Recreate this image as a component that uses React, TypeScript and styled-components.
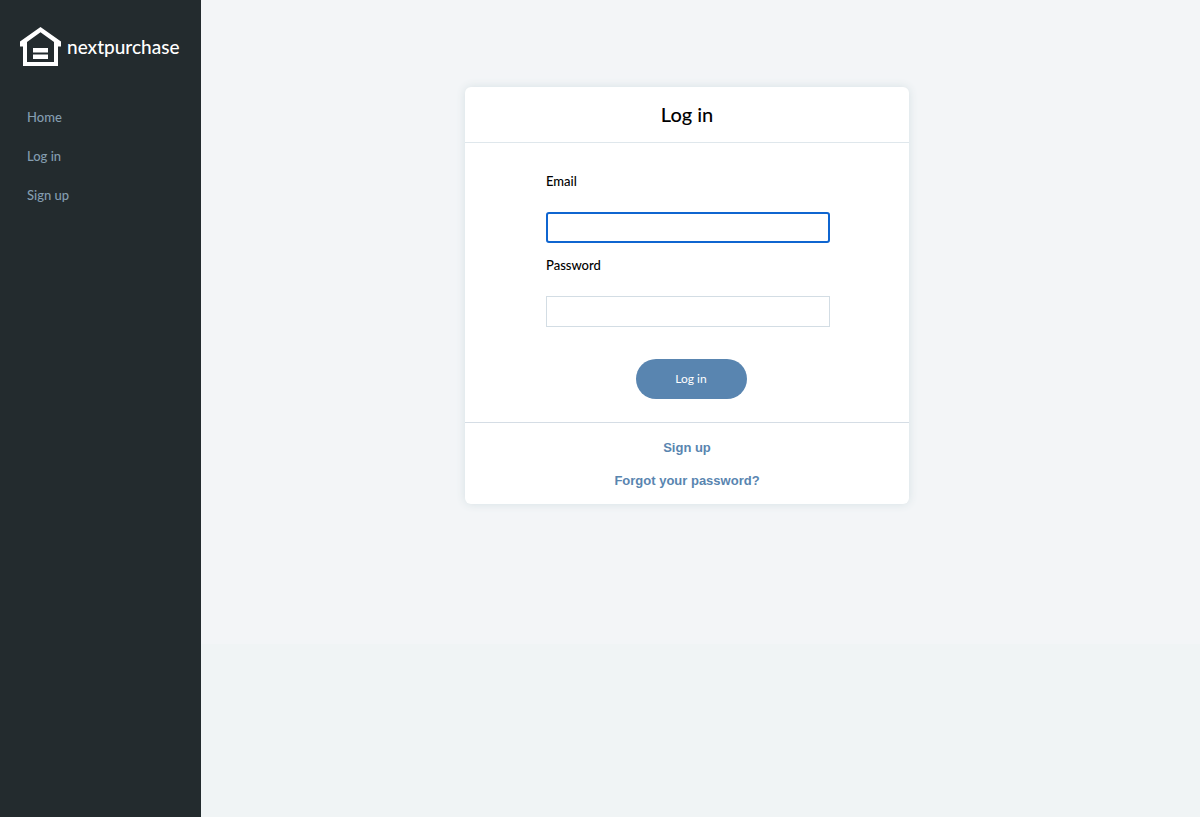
import React from "react";
import styled, { createGlobalStyle } from "styled-components";

const GlobalStyle = createGlobalStyle`
  *, *::before, *::after { box-sizing: border-box; }
  body {
    margin: 0;
    background: #f0f4f5;
    color: #000;
    font-family: Lato, "Liberation Sans", sans-serif;
    font-size: 13px;
    line-height: 20px;
  }
`;

const Page = styled.div`
  display: flex;
  min-height: 100vh;
`;

const Sidebar = styled.aside`
  flex: 0 0 201px;
  width: 201px;
  background: #232b2e;
`;

const Brand = styled.a`
  display: flex;
  align-items: center;
  gap: 5px;
  padding: 26px 0 0 20px;
  color: #fff;
  text-decoration: none;
`;

const BrandName = styled.span`
  font-size: 19px;
  font-weight: 500;
  line-height: 42px;
`;

const Nav = styled.nav`
  display: flex;
  flex-direction: column;
  align-items: flex-start;
  gap: 19px;
  padding: 39px 27px;
`;

const NavLink = styled.a`
  color: #849db0;
  font-size: 13px;
  font-weight: 500;
  line-height: 20px;
  text-decoration: none;
`;

const Main = styled.main`
  flex: 1;
  min-width: 0;
`;

const Section = styled.section`
  display: flex;
  justify-content: center;
  padding: 87px 27px 140px 0;
  background: #f3f5f7;
`;

const Card = styled.div`
  width: 100%;
  max-width: 444px;
  border-radius: 6px;
  background: #fff;
  box-shadow: 0 0 10px #d6e0e4;
`;

const Title = styled.h1`
  margin: 0;
  padding: 13px 0 14px;
  border-bottom: 1px solid #dfe7ec;
  font-size: 20px;
  font-weight: 500;
  line-height: 28px;
  text-align: center;
`;

const Form = styled.form`
  display: flex;
  flex-direction: column;
  padding: 28px 79px 23px 81px;
`;

const Field = styled.div`
  display: flex;
  flex-direction: column;
  gap: 21px;
  margin-bottom: 12px;
`;

const Label = styled.label`
  font-size: 13px;
  font-weight: 500;
  line-height: 20px;
`;

const Input = styled.input`
  width: 100%;
  height: 31px;
  padding: 0 8px;
  border: 1px solid #d3dde4;
  border-radius: 0;
  background: #fff;
  font: inherit;
  caret-color: transparent;

  &:focus {
    border: 2px solid #0f65d0;
    border-radius: 3px;
    outline: none;
  }
`;

const SubmitButton = styled.button`
  align-self: center;
  width: 111px;
  height: 40px;
  margin: 20px 0 0 6px;
  padding: 0 0 2px;
  border: 0;
  border-radius: 20px;
  background: #5985b0;
  color: #fff;
  font-family: inherit;
  font-size: 12px;
  cursor: pointer;
`;

const Footer = styled.footer`
  display: flex;
  flex-direction: column;
  align-items: center;
  gap: 13px;
  padding: 15px 0 13px;
  border-top: 1px solid #d5dde5;
`;

const FooterLink = styled.a`
  color: #5985b0;
  font-family: "Liberation Sans", Arial, sans-serif;
  font-size: 13px;
  font-weight: 700;
  line-height: 20px;
  text-decoration: none;
`;

function HouseLogo() {
  return (
    <svg width="42" height="42" viewBox="0 0 42 42" fill="#fff" aria-hidden="true">
      <path
        fillRule="evenodd"
        d="M20.500 1 L41 15.500 V20.500 H38 V40 H3 V20.500 H0 V15.500 Z M20.500 6.200 L7 16 V36 H34 V16 Z"
      />
      <rect x="13" y="22" width="15" height="4.500" />
      <rect x="13" y="28.500" width="15" height="4.500" />
    </svg>
  );
}

export default function App() {
  return (
    <>
      <GlobalStyle />
      <Page>
        <Sidebar>
          <Brand href="#home">
            <HouseLogo />
            <BrandName>nextpurchase</BrandName>
          </Brand>
          <Nav>
            <NavLink href="#home">Home</NavLink>
            <NavLink href="#login">Log in</NavLink>
            <NavLink href="#signup">Sign up</NavLink>
          </Nav>
        </Sidebar>
        <Main>
          <Section>
            <Card>
              <Title>Log in</Title>
              <Form>
                <Field>
                  <Label htmlFor="email">Email</Label>
                  <Input id="email" type="email" autoFocus />
                </Field>
                <Field>
                  <Label htmlFor="password">Password</Label>
                  <Input id="password" type="password" />
                </Field>
                <SubmitButton type="submit">Log in</SubmitButton>
              </Form>
              <Footer>
                <FooterLink href="#signup">Sign up</FooterLink>
                <FooterLink href="#forgot">Forgot your password?</FooterLink>
              </Footer>
            </Card>
          </Section>
        </Main>
      </Page>
    </>
  );
}
